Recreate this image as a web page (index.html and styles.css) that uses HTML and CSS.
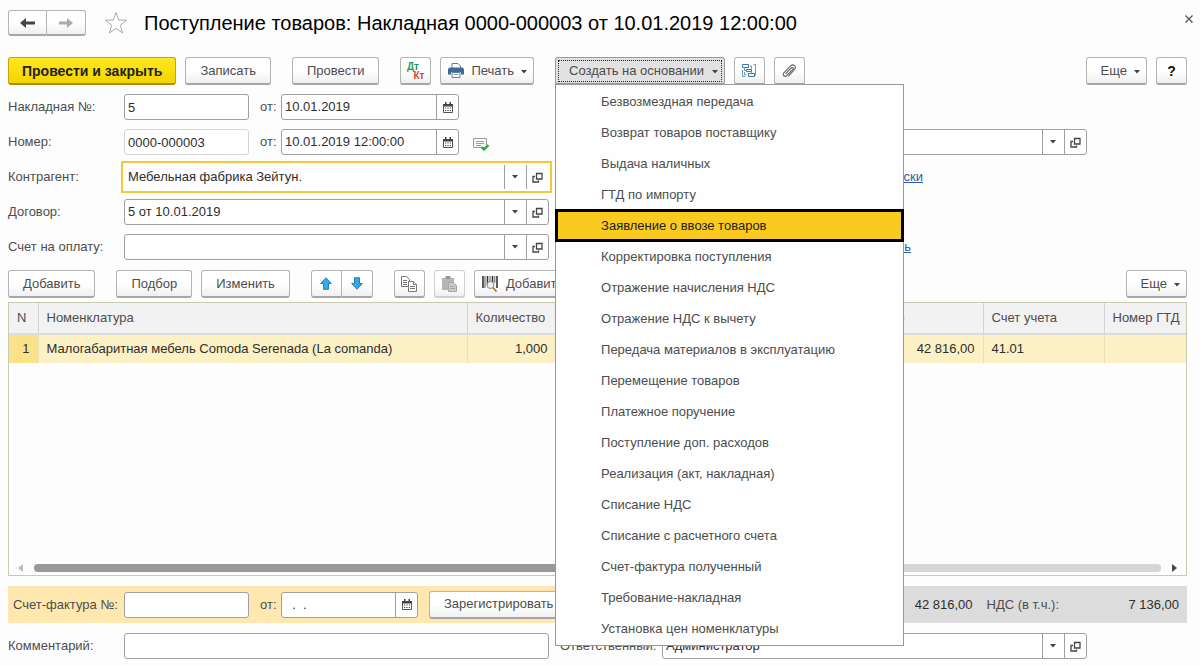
FILE: index.html
```html
<!DOCTYPE html>
<html lang="ru">
<head>
    <meta charset="UTF-8">
    <meta name="viewport" content="width=device-width, initial-scale=1.0">
    <title>Поступление товаров</title>
    <link rel="stylesheet" href="styles.css">
</head>
<body>
    <!-- shared icons -->
    <svg class="sprite" aria-hidden="true">
        <symbol id="calendar" viewBox="0 0 10 11">
            <path d="M.5 2.500h9v8h-9z" fill="#fff" stroke="#555"/>
            <path d="M0 2h10v2.500H0zM2 0h1.500v2H2zM6.500 0H8v2H6.500z" fill="#444"/>
            <path d="M2 6h6M2 8.500h6" stroke="#444" stroke-width="1.200" stroke-dasharray="1.200 1.200"/>
        </symbol>
        <symbol id="open" viewBox="0 0 11 11">
            <path d="M4.500 1.500h5.500v5.500h-5.500z" fill="none" stroke="#444" stroke-width="1.300"/>
            <path d="M3 4.500H1v5.500h5.500v-1.500" fill="none" stroke="#444" stroke-width="1.300"/>
        </symbol>
        <symbol id="caret" viewBox="0 0 6 4">
            <path d="M0 0h6L3 3.500z" fill="#444"/>
        </symbol>
    </svg>

    <main class="window">
        <header class="title-bar">
            <div class="split">
                <button class="btn btn-nav" aria-label="Назад">
                    <svg width="16" height="12" viewBox="0 0 16 12"><path d="M0 6l6-5v3.500h9v3H6V11z" fill="#444"/></svg>
                </button>
                <button class="btn btn-nav" aria-label="Вперед">
                    <svg width="16" height="12" viewBox="0 0 16 12"><path d="M15 6L9 1v3.500H1v3h8V11z" fill="#aaa"/></svg>
                </button>
            </div>
            <button class="plain" aria-label="Избранное">
                <svg width="24" height="24" viewBox="0 0 24 24"><path d="M12 1.500l2.700 7.500 8 .2-6.300 4.900 2.300 7.900-6.700-4.600L5.300 22l2.300-7.900L1.300 9.200l8-.2z" fill="#fff" stroke="#aaa"/></svg>
            </button>
            <h1>Поступление товаров: Накладная 0000-000003 от 10.01.2019 12:00:00</h1>
            <button class="plain close" aria-label="Закрыть">
                <svg width="8" height="8" viewBox="0 0 8 8"><path d="M.5.5l7 7M7.500.5l-7 7" stroke="#555" stroke-width="1.300"/></svg>
            </button>
        </header>

        <div class="toolbar">
            <div class="group">
                <button class="btn btn-primary">Провести и закрыть</button>
                <button class="btn">Записать</button>
            </div>
            <div class="group">
                <button class="btn">Провести</button>
            </div>
            <div class="group">
                <button class="btn btn-icon dtkt" aria-label="Дт Кт"><span class="dt">Дт</span><span class="kt">Кт</span></button>
                <button class="btn btn-menu">
                    <svg width="16" height="15" viewBox="0 0 16 15">
                        <path d="M4 5V.5h6L12.500 3v2" fill="#fff" stroke="#5f7f9c"/>
                        <path d="M1.500 4.500h13L16 6v5.500h-3V9H3v2.500H0V6z" fill="#3f6a92"/>
                        <path d="M4 9.500h8v5H4z" fill="#fff" stroke="#5f7f9c"/>
                        <path d="M5.500 11.500h5" stroke="#8aa2b8"/>
                    </svg>
                    Печать
                    <svg class="caret" width="6" height="4"><use href="#caret"/></svg>
                </button>
            </div>
            <div class="group">
                <div class="dropdown">
                    <button class="btn btn-menu btn-open" aria-expanded="true">
                        Создать на основании
                        <svg class="caret" width="6" height="4"><use href="#caret"/></svg>
                    </button>
                    <ul class="menu">
                        <li><button>Безвозмездная передача</button></li>
                        <li><button>Возврат товаров поставщику</button></li>
                        <li><button>Выдача наличных</button></li>
                        <li><button>ГТД по импорту</button></li>
                        <li class="selected"><button>Заявление о ввозе товаров</button></li>
                        <li><button>Корректировка поступления</button></li>
                        <li><button>Отражение начисления НДС</button></li>
                        <li><button>Отражение НДС к вычету</button></li>
                        <li><button>Передача материалов в эксплуатацию</button></li>
                        <li><button>Перемещение товаров</button></li>
                        <li><button>Платежное поручение</button></li>
                        <li><button>Поступление доп. расходов</button></li>
                        <li><button>Реализация (акт, накладная)</button></li>
                        <li><button>Списание НДС</button></li>
                        <li><button>Списание с расчетного счета</button></li>
                        <li><button>Счет-фактура полученный</button></li>
                        <li><button>Требование-накладная</button></li>
                        <li><button>Установка цен номенклатуры</button></li>
                    </ul>
                </div>
                <button class="btn btn-icon" aria-label="Структура подчиненности">
                    <svg width="16" height="15" viewBox="0 0 16 15" fill="none" stroke="#3f78a8">
                        <path d="M1.500 1.500h6v3h-6zM5.500 6.500h5v2h-5zM7.500 10.500h6v3h-6z"/>
                        <path d="M9 3h1.500v3.500M3.500 4.500v3h2M5.500 12H3.500V9M10.500 8.500v2M12.500 1.500h2v11M4 13.500H1.500V7" stroke="#6d9bc2"/>
                    </svg>
                </button>
                <button class="btn btn-icon" aria-label="Присоединенные файлы">
                    <svg width="16" height="16" viewBox="0 0 14 14" fill="none" stroke="#666">
                        <path d="M4 9.500l5-5.200c1-1 2.300.1 1.300 1.200L5 11c-1.700 1.700-4.200-.4-2.500-2.300l5.700-6c2.500-2.500 5.900.4 3.700 2.900L6.500 11.500"/>
                    </svg>
                </button>
            </div>
            <div class="group group-right">
                <button class="btn btn-menu">Еще <svg class="caret" width="6" height="4"><use href="#caret"/></svg></button>
                <button class="btn btn-icon help">?</button>
            </div>
        </div>

        <form class="form">
            <div class="column">
                <div class="row">
                    <label class="label" for="invoice-in">Накладная №:</label>
                    <input class="field short" id="invoice-in" type="text" value="5">
                    <label class="from" for="invoice-in-date">от:</label>
                    <div class="field date">
                        <input id="invoice-in-date" type="text" value="10.01.2019">
                        <button type="button" aria-label="Календарь"><svg width="10" height="11"><use href="#calendar"/></svg></button>
                    </div>
                </div>
                <div class="row">
                    <label class="label" for="number">Номер:</label>
                    <input class="field short readonly" id="number" type="text" value="0000-000003" readonly>
                    <label class="from" for="number-date">от:</label>
                    <div class="field date">
                        <input id="number-date" type="text" value="10.01.2019 12:00:00">
                        <button type="button" aria-label="Календарь"><svg width="10" height="11"><use href="#calendar"/></svg></button>
                    </div>
                    <svg class="posted" width="16" height="13" viewBox="0 0 16 13">
                        <path d="M.5.5h13v9H.5z" fill="#fff" stroke="#999"/>
                        <path d="M3 3.500h8M3 5.500h8M3 7.500h5" stroke="#999"/>
                        <path d="M8.500 9l2.500 2.500L15.500 7" fill="none" stroke="#2fae45" stroke-width="2.400"/>
                    </svg>
                </div>
                <div class="row">
                    <label class="label" for="partner">Контрагент:</label>
                    <div class="field combo focused">
                        <select id="partner"><option>Мебельная фабрика Зейтун.</option></select>
                        <svg class="arrow" width="6" height="4"><use href="#caret"/></svg>
                        <button type="button" aria-label="Открыть"><svg width="11" height="11"><use href="#open"/></svg></button>
                    </div>
                </div>
                <div class="row">
                    <label class="label" for="contract">Договор:</label>
                    <div class="field combo">
                        <select id="contract"><option>5 от 10.01.2019</option></select>
                        <svg class="arrow" width="6" height="4"><use href="#caret"/></svg>
                        <button type="button" aria-label="Открыть"><svg width="11" height="11"><use href="#open"/></svg></button>
                    </div>
                </div>
                <div class="row">
                    <label class="label" for="bill">Счет на оплату:</label>
                    <div class="field combo">
                        <select id="bill"><option></option></select>
                        <svg class="arrow" width="6" height="4"><use href="#caret"/></svg>
                        <button type="button" aria-label="Открыть"><svg width="11" height="11"><use href="#open"/></svg></button>
                    </div>
                </div>
            </div>
            <div class="column">
                <div class="row"></div>
                <div class="row">
                    <label class="label-right" for="store">Склад:</label>
                    <div class="field combo">
                        <select id="store"><option></option></select>
                        <svg class="arrow" width="6" height="4"><use href="#caret"/></svg>
                        <button type="button" aria-label="Открыть"><svg width="11" height="11"><use href="#open"/></svg></button>
                    </div>
                </div>
                <div class="row">
                    <span class="label-right">Расчеты:</span>
                    <a class="link-accounts" href="#">60.01, 60.02, зачет автоматически</a>
                </div>
                <div class="row"></div>
                <div class="row">
                    <span class="label-right"></span>
                    <a class="link-shipper" href="#">Грузоотправитель и грузополучатель</a>
                </div>
            </div>
        </form>

        <div class="toolbar toolbar-table">
            <div class="group">
                <button class="btn">Добавить</button>
            </div>
            <div class="group">
                <button class="btn">Подбор</button>
                <button class="btn">Изменить</button>
            </div>
            <div class="group">
                <div class="split">
                    <button class="btn btn-icon" aria-label="Вверх">
                        <svg width="12" height="13" viewBox="0 0 12 13"><path d="M6 .7l5.300 5.800H8.500v5.800h-5V6.500H.7z" fill="#35a8e8" stroke="#2b7db5"/></svg>
                    </button>
                    <button class="btn btn-icon" aria-label="Вниз">
                        <svg width="12" height="13" viewBox="0 0 12 13"><path d="M6 12.300l5.300-5.800H8.500V.7h-5v5.800H.7z" fill="#35a8e8" stroke="#2b7db5"/></svg>
                    </button>
                </div>
            </div>
            <div class="group">
                <button class="btn btn-icon" aria-label="Копировать">
                    <svg width="16" height="16" viewBox="0 0 16 16" fill="#fff" stroke="#777">
                        <path d="M.5.5h5l3 3v7h-8z"/><path d="M2 4.500h4M2 6.500h4M2 8.500h4"/>
                        <path d="M7.500 5.500h5l3 3v7h-8z"/><path d="M12.500 5.500v3h3M9 10.500h5M9 12.500h5"/>
                    </svg>
                </button>
                <button class="btn btn-icon" aria-label="Вставить" disabled>
                    <svg width="15" height="16" viewBox="0 0 15 16">
                        <path d="M0 2h12v12H0z" fill="#b5b5b5"/><path d="M3.500 0h5v3h-5z" fill="#999"/>
                        <path d="M6.500 6.500h5l3 3v6h-8z" fill="#ccc" stroke="#a5a5a5"/><path d="M8 10.500h5M8 12.500h5" stroke="#a5a5a5"/>
                    </svg>
                </button>
                <button class="btn btn-barcode">
                    <svg width="16" height="16" viewBox="0 0 16 16">
                        <path d="M1 0v12M5.500 0v9M10.500 0v6M15 0v12" stroke="#333" stroke-width="1.600"/>
                        <path d="M3 0v12M8 0v6M12.800 0v7" stroke="#333" stroke-width=".8"/>
                        <circle cx="8.500" cy="9" r="3.500" fill="#eee" stroke="#888"/>
                        <path d="M11 11.500l3.500 4" stroke="#b5793f" stroke-width="1.800"/>
                    </svg>
                    Добавить по штрихкоду
                </button>
            </div>
            <div class="group group-right">
                <button class="btn btn-menu">Еще <svg class="caret" width="6" height="4"><use href="#caret"/></svg></button>
            </div>
        </div>

        <section class="goods">
            <table>
                <colgroup>
                    <col class="col-n"><col><col class="col-qty"><col class="col-sum"><col class="col-sum"><col class="col-sum"><col class="col-total"><col class="col-account"><col class="col-gtd">
                </colgroup>
                <thead>
                    <tr>
                        <th>N</th>
                        <th>Номенклатура</th>
                        <th>Количество</th>
                        <th>Цена</th>
                        <th>Сумма</th>
                        <th>НДС</th>
                        <th>Всего</th>
                        <th>Счет учета</th>
                        <th>Номер ГТД</th>
                    </tr>
                </thead>
                <tbody>
                    <tr>
                        <td class="num current">1</td>
                        <td>Малогабаритная мебель Comoda Serenada (La comanda)</td>
                        <td class="num">1,000</td>
                        <td class="num"></td>
                        <td class="num"></td>
                        <td class="num"></td>
                        <td class="num">42 816,00</td>
                        <td>41.01</td>
                        <td></td>
                    </tr>
                </tbody>
            </table>
            <div class="scrollbar">
                <svg width="5" height="8" viewBox="0 0 5 8"><path d="M5 0v8L0 4z" fill="#bbb"/></svg>
                <div class="track"><div class="thumb"></div></div>
                <svg width="5" height="8" viewBox="0 0 5 8"><path d="M0 0v8l5-4z" fill="#444"/></svg>
            </div>
        </section>

        <div class="summary">
            <div class="invoice">
                <label class="label-invoice" for="invoice">Счет-фактура №:</label>
                <input class="field short" id="invoice" type="text">
                <label class="from" for="invoice-date">от:</label>
                <div class="field date date-short">
                    <input id="invoice-date" type="text" value="  .  .">
                    <button type="button" aria-label="Календарь"><svg width="10" height="11"><use href="#calendar"/></svg></button>
                </div>
                <button class="btn btn-register">Зарегистрировать</button>
            </div>
            <div class="totals">
                <output class="total">42 816,00</output>
                <span>НДС (в т.ч.):</span>
                <output class="vat">7 136,00</output>
            </div>
        </div>

        <footer class="form">
            <div class="column row">
                <label class="label" for="comment">Комментарий:</label>
                <input class="field grow" id="comment" type="text">
            </div>
            <div class="column row">
                <label class="label-right" for="responsible">Ответственный:</label>
                <div class="field combo">
                    <select id="responsible"><option>Администратор</option></select>
                    <svg class="arrow" width="6" height="4"><use href="#caret"/></svg>
                    <button type="button" aria-label="Открыть"><svg width="11" height="11"><use href="#open"/></svg></button>
                </div>
            </div>
        </footer>
    </main>
</body>
</html>
```
FILE: styles.css
```css
:root {
    --text: #4d4d4d;
    --text-dark: #2e2e2e;
    --border: #a0a0a0;
    --border-light: #c9c9b4;
    --focus: #f3c936;
    --selected: #f9cb1e;
    --row: #fcf0c5;
    --row-current: #fbe288;
    --link: #2f5da8;
}

* {
    box-sizing: border-box;
    margin: 0;
    padding: 0;
}

body {
    background-color: #fdfdfd;
    color: var(--text);
    font-family: "Liberation Sans", Arial, sans-serif;
    font-size: 13px;
    line-height: 16px;
}

button,
input,
select {
    font: inherit;
    color: inherit;
}

svg {
    display: block;
    flex: none;
}

.sprite {
    position: absolute;
    width: 0;
    height: 0;
}

.window {
    display: flex;
    flex-direction: column;
    min-height: 100vh;
    padding: 10px 13px 7px 8px;
}

/* title */
.title-bar {
    display: flex;
    align-items: center;
    height: 26px;
    margin-bottom: 21px;
}

.title-bar h1 {
    flex: 1;
    margin-left: 16px;
    color: #000;
    font-size: 20px;
    font-weight: normal;
    line-height: 26px;
}

.title-bar .split {
    margin-right: 18px;
}

.plain {
    border: none;
    background: none;
}

.close {
    align-self: flex-start;
    padding: 5px;
    margin-right: -11px;
}

/* buttons */
.btn {
    display: flex;
    align-items: center;
    justify-content: center;
    height: 28px;
    padding: 0 14px;
    border: 1px solid #b4b4b4;
    border-bottom: 2px solid #a6a6a6;
    border-radius: 3px;
    background: linear-gradient(#fff 50%, #f0f0f0);
    white-space: nowrap;
}

.btn-primary {
    padding: 0 13px;
    border-color: #c2a60a;
    border-bottom-color: #a58d08;
    background: linear-gradient(#ffe81f, #f5d400);
    color: #222;
    font-size: 14px;
    font-weight: bold;
}

.btn-icon {
    width: 31px;
    padding: 0;
}

.btn-nav {
    width: 39px;
    height: 26px;
    padding: 0;
}

.btn-menu {
    gap: 7px;
    padding: 0 6px 0 7px;
}

.btn-menu .caret {
    margin-top: 3px;
}

.group-right .btn-menu {
    padding-left: 14px;
}

.btn-open {
    gap: 8px;
    padding-left: 13px;
    border-color: #9a9a9a;
    background: #e2e2e2;
    outline: 1px dotted #222;
    outline-offset: -4px;
}

.btn-barcode {
    gap: 8px;
    padding-left: 7px;
}

.btn:disabled {
    border-color: #d0d0d0;
}

.help {
    color: #111;
    font-size: 14px;
    font-weight: bold;
}

.dtkt {
    flex-direction: column;
    font-size: 10px;
    font-weight: bold;
    line-height: 9px;
}

.dt {
    margin-right: 6px;
    color: #1b9a50;
}

.kt {
    margin-left: 6px;
    color: #d8433c;
}

.split {
    display: flex;
}

.split .btn:first-child {
    border-radius: 3px 0 0 3px;
}

.split .btn:last-child {
    border-left: none;
    border-radius: 0 3px 3px 0;
}

.toolbar {
    display: flex;
    gap: 21px;
    margin-bottom: 9px;
}

.toolbar-table {
    margin-bottom: 4px;
}

.group {
    display: flex;
    gap: 9px;
}

.group-right {
    margin-left: auto;
}

/* drop-down menu */
.dropdown {
    position: relative;
}

.menu {
    position: absolute;
    z-index: 10;
    top: 27px;
    left: 0;
    width: 349px;
    padding: 1px 0;
    border: 1px solid #999;
    background-color: #fefefe;
    list-style: none;
}

.menu button {
    display: block;
    width: 100%;
    height: 31px;
    padding-left: 45px;
    border: none;
    background: none;
    text-align: left;
}

.menu .selected {
    margin: -1px;
    border: 3px solid #000;
    background-color: var(--selected);
    color: #222;
}

.menu .selected button {
    height: 27px;
    padding-left: 43px;
}

/* fields */
.form {
    display: flex;
    gap: 11px;
    margin-bottom: 10px;
}

.column {
    display: flex;
    flex-direction: column;
    gap: 9px;
    width: 541px;
}

.column + .column {
    width: 527px;
}

.row {
    display: flex;
    flex-direction: row;
    align-items: center;
    gap: 0;
    height: 26px;
}

.label {
    flex: none;
    width: 116px;
}

.label-right {
    flex: none;
    width: 102px;
}

.label-invoice {
    flex: none;
    width: 111px;
}

.from {
    width: 32px;
    padding-left: 11px;
}

.field {
    height: 26px;
    border: 1px solid var(--border);
    border-radius: 3px;
    background-color: #fff;
    color: var(--text-dark);
}

input.field {
    padding: 0 3px;
}

.short {
    width: 125px;
}

.grow {
    flex: 1;
}

.readonly {
    border-color: #d5d5d5;
}

.date,
.combo {
    display: flex;
}

.date {
    width: 178px;
}

.date-short {
    width: 137px;
}

.combo {
    position: relative;
    flex: 1;
}

.field input,
.field select {
    flex: 1;
    min-width: 0;
    padding: 0 3px;
    border: none;
    background: none;
    appearance: none;
    outline: none;
}

.field button {
    display: flex;
    align-items: center;
    justify-content: center;
    width: 22px;
    border: none;
    border-left: 1px solid var(--border);
    background: none;
}

/* divider in front of the select arrow */
.combo select {
    background: linear-gradient(var(--border), var(--border)) right 21px top / 1px 100% no-repeat;
}

.combo .arrow {
    position: absolute;
    top: 10px;
    right: 30px;
    pointer-events: none;
}

.focused {
    border-color: transparent;
    border-radius: 0;
    outline: 2px solid var(--focus);
    outline-offset: 1px;
}

.posted {
    margin: 4px 0 0 14px;
}

.link-accounts,
.link-shipper {
    color: var(--link);
    text-align: right;
}

.link-accounts {
    width: 261px;
}

.link-shipper {
    width: 249px;
}

/* goods table */
.goods {
    display: flex;
    flex: 1;
    flex-direction: column;
    justify-content: space-between;
    margin-bottom: 10px;
    border: 1px solid var(--border-light);
}

table {
    width: 100%;
    border-collapse: collapse;
    table-layout: fixed;
}

.col-n {
    width: 29px;
}

.col-qty {
    width: 89px;
}

.col-sum {
    width: 102px;
}

.col-total,
.col-account {
    width: 121px;
}

.col-gtd {
    width: 82px;
}

th,
td {
    padding: 0 8px;
    overflow: hidden;
    text-align: left;
    white-space: nowrap;
}

th {
    height: 31px;
    border-right: 1px solid #d2d2d2;
    border-bottom: 2px solid #dcdcdc;
    background-color: #f2f2f2;
    font-weight: normal;
}

td {
    height: 29px;
    border-right: 1px solid #e8dfbd;
    background-color: var(--row);
    color: var(--text-dark);
}

th:last-child,
td:last-child {
    border-right: none;
}

.num {
    text-align: right;
}

.current {
    background-color: var(--row-current);
}

.scrollbar {
    display: flex;
    align-items: center;
    gap: 11px;
    padding: 3px 9px;
}

.track {
    flex: 1;
    height: 8px;
    border-radius: 4px;
    background-color: #d6d6d6;
}

.thumb {
    width: 70%;
    height: 8px;
    border-radius: 4px;
    background-color: #999;
}

/* invoice and totals */
.summary {
    display: flex;
    margin-bottom: 10px;
}

.invoice,
.totals {
    display: flex;
    align-items: center;
    height: 37px;
}

.invoice {
    width: 700px;
    padding-left: 5px;
    background-color: #fee8b0;
}

.btn-register {
    margin-left: 11px;
}

.totals {
    flex: 1;
    justify-content: flex-end;
    background-color: #dcdcdc;
}

.totals output {
    color: var(--text-dark);
    text-align: right;
}

.total {
    width: 100px;
    margin-right: 14px;
}

.vat {
    width: 120px;
    margin-right: 8px;
}

footer.form {
    margin-bottom: 0;
}
```
